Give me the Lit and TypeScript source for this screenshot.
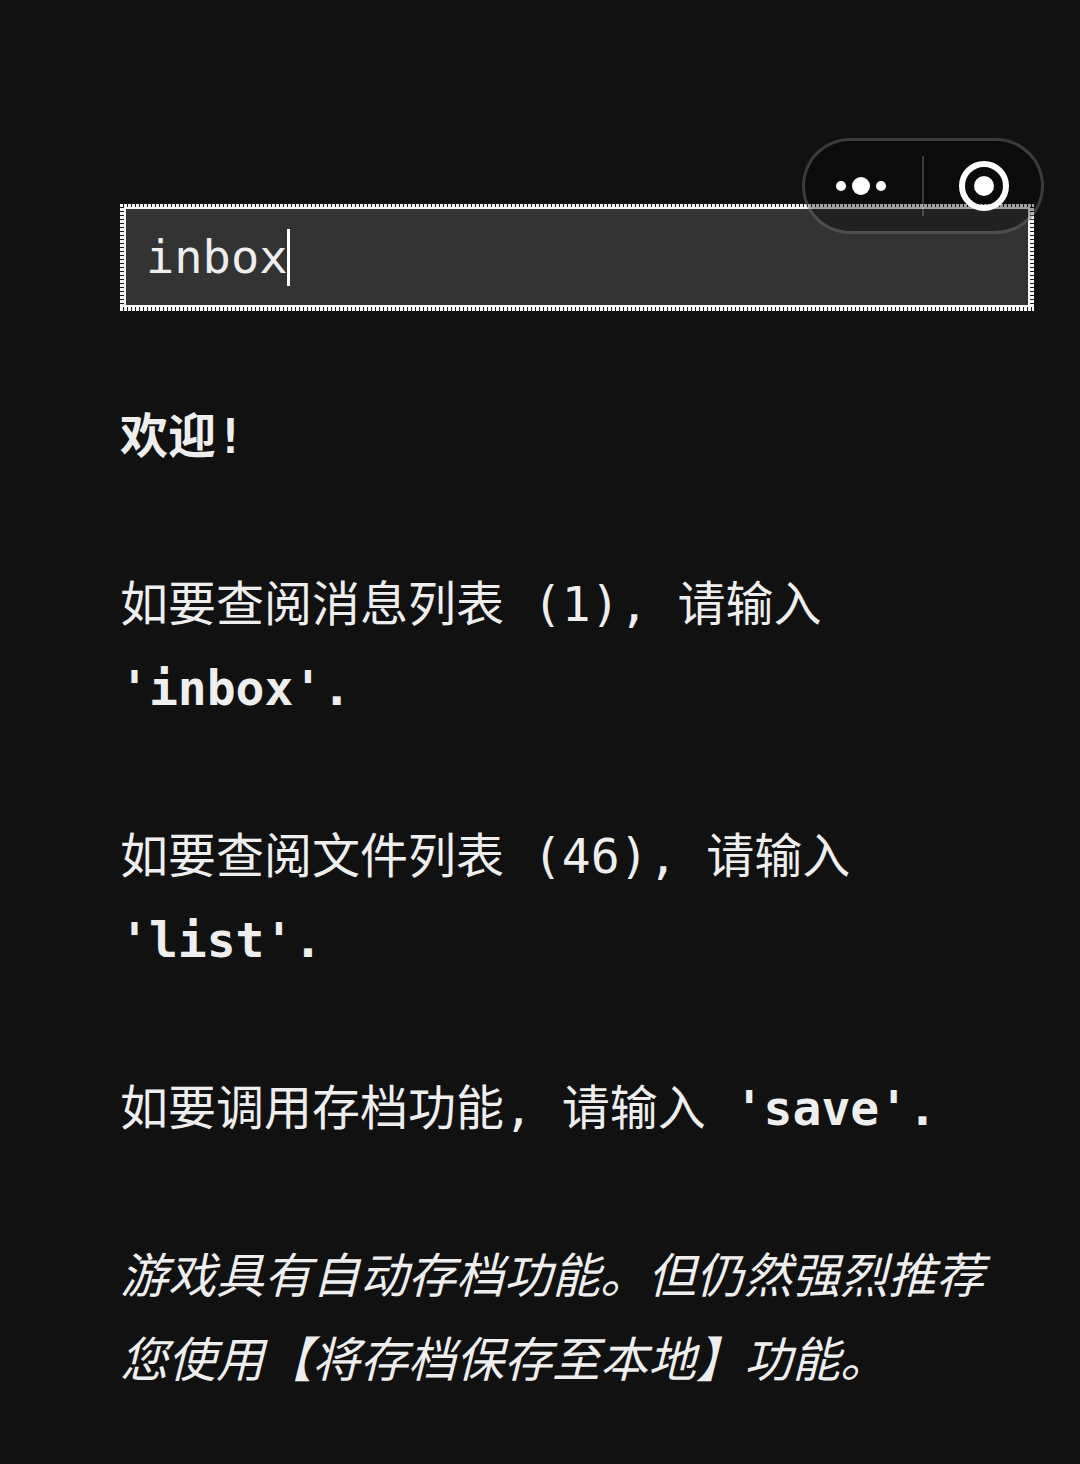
import { LitElement, html, css } from 'lit';
import { customElement } from 'lit/decorators.js';

@customElement('app-root')
export class AppRoot extends LitElement {
  static styles = css`
    :host {
      display: block;
      position: relative;
      height: 1464px;
      overflow: hidden;
      box-sizing: border-box;
      padding: 204px 46px 0 120px;
      background: #111111;
      color: #eeeeee;
      font-family: 'DejaVu Sans Mono', 'Noto Sans CJK SC', monospace;
      font-size: 48px;
      line-height: 84px;
    }

    /* dotted focus ring around the input */
    .ring {
      padding: 3px 4px 4px;
      margin-bottom: 83px;
      background:
        repeating-linear-gradient(90deg, #f6f6f6 0 3px, #1c1c1c 3px 4px) top / 100% 3px no-repeat,
        repeating-linear-gradient(90deg, #f6f6f6 0 3px, #1c1c1c 3px 4px) bottom / 100% 4px no-repeat,
        repeating-linear-gradient(180deg, #f6f6f6 0 3px, #1c1c1c 3px 4px) left / 4px 100% no-repeat,
        repeating-linear-gradient(180deg, #f6f6f6 0 3px, #1c1c1c 3px 4px) right / 4px 100% no-repeat;
    }

    .input {
      display: flex;
      align-items: center;
      height: 96px;
      padding-left: 20px;
      border: 2px solid #f4f4f4;
      background: #333333;
      font-size: 47px;
      line-height: 56px;
    }

    .caret {
      width: 3px;
      height: 57px;
      background: #ffffff;
    }

    .log {
      width: 900px;
    }

    p {
      margin: 0 0 84px;
    }

    b {
      font-weight: 700;
    }

    .note {
      font-style: italic;
    }

    .capsule {
      position: absolute;
      top: 138px;
      left: 802px;
      width: 242px;
      height: 96px;
      box-sizing: border-box;
      display: flex;
      align-items: center;
      border: 3px solid rgba(255, 255, 255, 0.2);
      border-radius: 48px;
      background: rgba(0, 0, 0, 0.35);
    }

    .more {
      flex: none;
      box-sizing: border-box;
      display: flex;
      align-items: center;
      gap: 6px;
      width: 117px;
      padding-left: 31px;
    }

    .more i {
      width: 10px;
      height: 10px;
      border-radius: 50%;
      background: #ffffff;
    }

    .more i.big {
      width: 18px;
      height: 18px;
    }

    .divider {
      flex: none;
      width: 2px;
      height: 60px;
      background: rgba(255, 255, 255, 0.2);
    }

    .capsule svg {
      display: block;
      margin-left: 35px;
    }
  `;

  render() {
    return html`
      <div class="ring">
        <div class="input">inbox<span class="caret"></span></div>
      </div>
      <div class="log">
        <p><b>欢迎!</b></p>
        <p>如要查阅消息列表 (1), 请输入 <b>'inbox'.</b></p>
        <p>如要查阅文件列表 (46), 请输入 <b>'list'.</b></p>
        <p>如要调用存档功能, 请输入 <b>'save'.</b></p>
        <p class="note">游戏具有自动存档功能。但仍然强烈推荐您使用【将存档保存至本地】功能。</p>
      </div>
      <div class="capsule">
        <div class="more"><i></i><i class="big"></i><i></i></div>
        <div class="divider"></div>
        <svg width="50" height="50" viewBox="0 0 50 50">
          <circle cx="25" cy="25" r="22" fill="none" stroke="#fff" stroke-width="6"></circle>
          <circle cx="25" cy="25" r="10" fill="#fff"></circle>
        </svg>
      </div>
    `;
  }
}
